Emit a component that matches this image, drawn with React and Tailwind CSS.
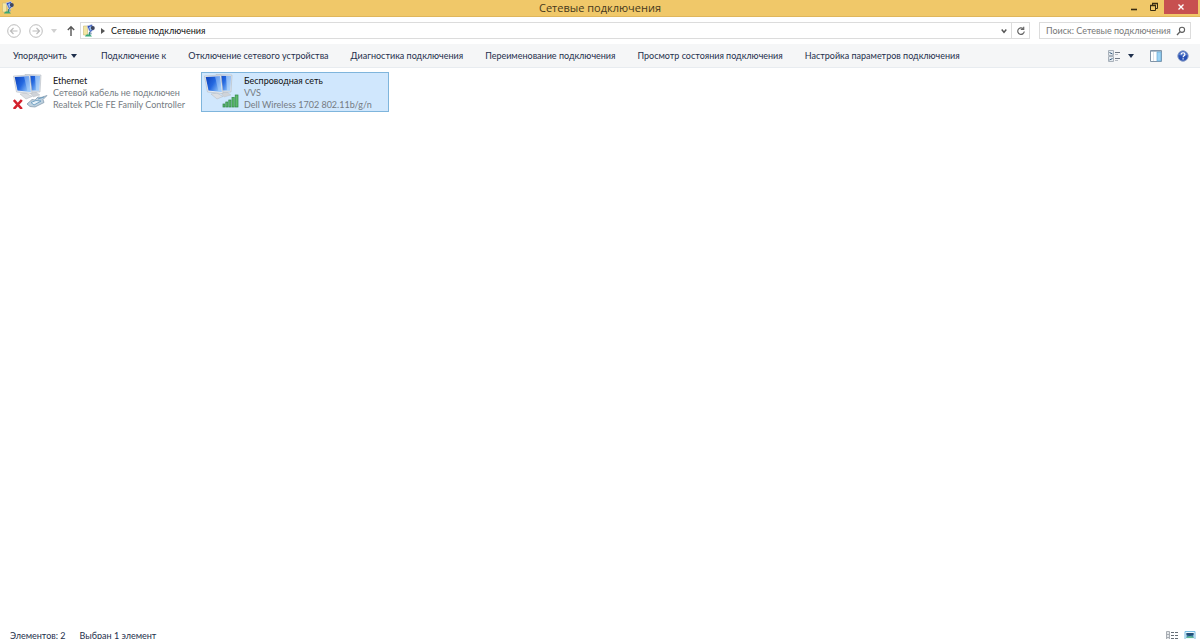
import React from "react";

function Monitors({ id }) {
  return (
    <>
      <defs>
        <linearGradient id={id + "s"} x1="0" y1="0" x2="1" y2="0.6">
          <stop offset="0" stopColor="#0d3fb8" />
          <stop offset="0.55" stopColor="#2468e0" />
          <stop offset="1" stopColor="#8cc0f8" />
        </linearGradient>
      </defs>
      <path d="M17 20l6-1 4 3-7 2z" fill="#cfd3d8" stroke="#b9bec5" strokeWidth="0.4" />
      <path d="M12 1.500L28 2 27 19 14 19z" fill="#dfe4ea" stroke="#b3bac3" strokeWidth="0.6" />
      <path d="M13 2.700L26.800 3.100 26 17.500 15 17.500z" fill={`url(#${id}s)`} />
      <path d="M22 3l4.800.1L26 17.500h-3z" fill="#b5d7fb" opacity="0.7" />
      <path d="M7 21l6-1 6 3.500-6 2.500z" fill="#dcdfe3" stroke="#b3b8bf" strokeWidth="0.5" />
      <path d="M0.500 3L17 2 19 20.500 3.500 19z" fill="#e8ecf0" stroke="#b3bac3" strokeWidth="0.6" />
      <path d="M1.700 4L16 3.200 17.700 18.900 4.500 17.600z" fill={`url(#${id}s)`} />
      <path d="M11 3.500l5-.3 1.700 15.700-3.200-.3z" fill="#b0d3fb" opacity="0.5" />
    </>
  );
}

function EthernetIcon() {
  return (
    <svg className="w-9 h-9 shrink-0" viewBox="0 0 36 36" aria-hidden="true">
      <Monitors id="eth" />
      <path d="M14 31l5-4.500 3 .5 3-3 3 .5 6-2-4 4 1 3-9 4.500-5-.5z" fill="#bdd0de" stroke="#7d94a8" strokeWidth="0.7" />
      <path d="M18 29.500l5-2 5 .5-7 4zM25 26l6-2" fill="#e6f0f7" stroke="#5f95bd" strokeWidth="0.8" />
      <path d="M0.800 27l8 9M8.800 27l-8 9" stroke="#d3202c" strokeWidth="2.600" />
    </svg>
  );
}

function WirelessIcon() {
  return (
    <svg className="w-9 h-9 shrink-0" viewBox="0 0 36 36" aria-hidden="true">
      <Monitors id="wifi" />
      <g fill="#5fba6c" stroke="#2d8745" strokeWidth="0.7">
        <rect x="19" y="31" width="1.800" height="3" />
        <rect x="21.800" y="29" width="2" height="5" />
        <rect x="24.800" y="27" width="2.200" height="7" />
        <rect x="28" y="24.500" width="2.200" height="9.500" />
        <rect x="31.200" y="22" width="2.800" height="12" />
      </g>
    </svg>
  );
}

function FolderNetIcon() {
  return (
    <svg className="w-3.5 h-3.5 shrink-0" viewBox="0 0 14 14" aria-hidden="true">
      <path d="M1.500 2h4v9h-4z" fill="#f3e7a4" stroke="#c9b872" strokeWidth="0.6" />
      <path d="M5 2l5-1.500 2 5-4 3z" fill="#2a49b8" stroke="#c9d2e4" strokeWidth="0.8" />
      <path d="M7 3l2.500-1 .5 4-2 .8z" fill="#9cc4f4" />
      <circle cx="10.800" cy="4" r="2" fill="#40465e" />
      <path d="M6 9l3-1 1 2-2 1z" fill="#8aa6bd" />
      <path d="M3 12.500c1-3 5-3 7 0z" fill="#38a877" />
      <path d="M7.500 8v3" stroke="#368f78" />
    </svg>
  );
}

function ArrowCircle({ flip }) {
  return (
    <svg className="w-3.5 h-3.5" viewBox="0 0 14 14" fill="none" stroke="#bcbcbc" aria-hidden="true">
      <circle cx="7" cy="7" r="6.300" />
      <path d={flip ? "M3.500 7h7M7.500 4l3 3-3 3" : "M10.500 7h-7M6.500 4l-3 3 3 3"} strokeWidth="1.200" />
    </svg>
  );
}

function Caret({ color = "#1e2f4c" }) {
  return (
    <svg className="w-1.5 h-1" viewBox="0 0 6 4" aria-hidden="true">
      <path d="M0 0h6L3 4z" fill={color} />
    </svg>
  );
}

const actions = [
  "Подключение к",
  "Отключение сетевого устройства",
  "Диагностика подключения",
  "Переименование подключения",
  "Просмотр состояния подключения",
  "Настройка параметров подключения",
];

function Connection({ icon, name, lines, selected }) {
  return (
    <button
      type="button"
      aria-pressed={selected}
      className={
        "flex w-[188px] h-10 items-start border pl-0.5 text-left leading-3 whitespace-nowrap " +
        (selected ? "bg-[#d0e7fd] border-[#7fb5dc]" : "border-transparent")
      }
    >
      {icon}
      <span className="flex flex-col pl-1 pt-0.5 text-[#757b82]">
        <span className="text-[#111]">{name}</span>
        {lines.map((line) => (
          <span key={line}>{line}</span>
        ))}
      </span>
    </button>
  );
}

export default function App() {
  return (
    <div className="flex h-screen flex-col overflow-hidden bg-white text-[9px] leading-3 text-[#111] font-['Lato','Open_Sans',sans-serif]">
      <header className="grid h-[17px] shrink-0 grid-cols-[1fr_auto_1fr] items-center border-b border-[#dfb65c] bg-[#f0c869]">
        <div className="pl-px">
          <FolderNetIcon />
        </div>
        <h1 className="font-['Open_Sans',sans-serif] text-[11px] leading-4 text-[#45381c]">Сетевые подключения</h1>
        <div className="flex h-full items-start justify-end pr-0.5">
          <button type="button" aria-label="Свернуть" className="grid h-3.5 w-5 place-items-center">
            <svg className="h-3 w-2" viewBox="0 0 8 12">
              <path d="M1 8.500h6" stroke="#382c12" strokeWidth="1.600" />
            </svg>
          </button>
          <button type="button" aria-label="Восстановить" className="grid h-3.5 w-5 place-items-center">
            <svg className="h-3 w-2.5" viewBox="0 0 10 12" fill="none" stroke="#382c12">
              <path d="M3.500 4V2.500h5v5H7" />
              <path d="M1.500 4.500h5v5h-5z" />
              <path d="M1 4.500h6M3 2.500h6" strokeWidth="1.500" />
            </svg>
          </button>
          <button type="button" aria-label="Закрыть" className="grid h-3.5 w-[34px] place-items-center bg-[#c75050]">
            <svg className="h-2 w-2" viewBox="0 0 8 8">
              <path d="M1.500 1.500l5 5M6.500 1.500l-5 5" stroke="#fff" strokeWidth="1.400" />
            </svg>
          </button>
        </div>
      </header>

      <nav className="flex h-[27px] shrink-0 items-center pl-[7px] pr-[9px]">
        <button type="button" aria-label="Назад"><ArrowCircle /></button>
        <button type="button" aria-label="Вперед" className="ml-2"><ArrowCircle flip /></button>
        <button type="button" aria-label="Последние расположения" className="ml-2 flex h-4 w-1.5 items-center">
          <Caret color="#d0d0d0" />
        </button>
        <button type="button" aria-label="Вверх" className="ml-[9px]">
          <svg className="h-3 w-2.5" viewBox="0 0 10 12" fill="none" stroke="#555" strokeWidth="1.400" aria-hidden="true">
            <path d="M5 11V2M1.800 5L5 1.800 8.200 5" />
          </svg>
        </button>
        <div className="ml-1 flex h-[17px] flex-1 items-center border border-[#dcdcdc] pl-px">
          <FolderNetIcon />
          <svg className="ml-[5px] mr-1.5 h-1.5 w-1" viewBox="0 0 4 6" aria-hidden="true">
            <path d="M0 0l4 3-4 3z" fill="#555" />
          </svg>
          <button type="button" className="flex-1 text-left">Сетевые подключения</button>
          <button type="button" aria-label="Предыдущие расположения" className="grid h-full w-3.5 place-items-center">
            <svg className="h-1.5 w-1.5" viewBox="0 0 6 6" fill="none" stroke="#555" strokeWidth="1.400">
              <path d="M.7 1.500L3 4.300l2.300-2.800" />
            </svg>
          </button>
          <button type="button" aria-label="Обновить" className="grid h-full w-[18px] place-items-center border-l border-[#dcdcdc]">
            <svg className="h-2.5 w-2.5" viewBox="0 0 10 10" fill="none" stroke="#666">
              <path d="M7.200 2.600A3.300 3.300 0 1 0 8.300 5.500" strokeWidth="1.200" />
              <path d="M4.800 3.300h2.900V.7" strokeWidth="1.200" />
            </svg>
          </button>
        </div>
        <label className="ml-[9px] flex h-[17px] w-[152px] items-center border border-[#dcdcdc] pl-1.5 pr-1">
          <input
            type="text"
            aria-label="Поиск"
            placeholder="Поиск: Сетевые подключения"
            className="min-w-0 flex-1 bg-transparent outline-none placeholder:text-[#777]"
          />
          <svg className="h-2.5 w-2.5 shrink-0" viewBox="0 0 10 10" fill="none" stroke="#5d5d5d" aria-hidden="true">
            <circle cx="6" cy="3.800" r="2.600" strokeWidth="1.100" />
            <path d="M4 5.800L1 9" strokeWidth="1.300" />
          </svg>
        </label>
      </nav>

      <div role="toolbar" className="flex h-6 shrink-0 items-center border-b border-[#e8ecf0] bg-[#f5f6f7] pl-[13px] pr-[11px] text-[#1e2f4c] whitespace-nowrap">
        <button type="button" className="mr-6 flex items-center gap-1">
          Упорядочить <Caret />
        </button>
        <div className="flex gap-[22px]">
          {actions.map((action) => (
            <button key={action} type="button">{action}</button>
          ))}
        </div>
        <div className="ml-auto flex items-center">
          <button type="button" aria-label="Изменить представление" className="flex items-center gap-2">
            <svg className="h-3 w-3" viewBox="0 0 12 12" fill="none" aria-hidden="true">
              <path d="M.5.500h5v5h-5zM.5 6.500h5v5h-5z" fill="#e3e9ef" stroke="#a9b1ba" />
              <path d="M1.500 2.500l3 1.500M4.500 8.500l-3 1.500" stroke="#395d7c" />
              <path d="M7 2.500h5M7 8.500h5" stroke="#707985" />
              <path d="M7 4.500h3M7 10.500h3" stroke="#b8bec6" />
            </svg>
            <Caret />
          </button>
          <button type="button" aria-label="Область предварительного просмотра" className="ml-4">
            <svg className="h-3 w-3" viewBox="0 0 12 12" aria-hidden="true">
              <path d="M.5.500h11v11H.5z" fill="#fff" stroke="#8194a7" />
              <path d="M1 1.500h10" stroke="#aebdca" />
              <path d="M7 2h4v9H7z" fill="#9dd4f5" stroke="#69a9d5" strokeWidth="0.700" />
              <path d="M3.500 2v9" stroke="#dce3e9" />
            </svg>
          </button>
          <button type="button" aria-label="Справка" className="ml-[15px]">
            <svg className="h-3 w-3" viewBox="0 0 12 12" aria-hidden="true">
              <circle cx="6" cy="6" r="5.200" fill="#2850b4" stroke="#8b9fc8" />
              <path d="M1.700 5a4.400 4.400 0 0 1 8.600 0c-2 1-6 1-8.600 0z" fill="#7897d9" opacity="0.600" />
              <path d="M4.200 4.500c0-2.400 3.700-2.200 3.700 0C7.900 5.800 6.100 5.800 6.100 7.200M6.100 8.200v1.300" fill="none" stroke="#fff" strokeWidth="1.200" />
            </svg>
          </button>
        </div>
      </div>

      <main className="flex flex-1 items-start gap-[3px] pl-2.5 pt-1">
        <Connection
          icon={<EthernetIcon />}
          name="Ethernet"
          lines={["Сетевой кабель не подключен", "Realtek PCIe FE Family Controller"]}
        />
        <Connection
          icon={<WirelessIcon />}
          name="Беспроводная сеть"
          lines={["VVS", "Dell Wireless 1702 802.11b/g/n"]}
          selected
        />
      </main>

      <footer className="flex h-[9px] shrink-0 items-start pl-2.5 pr-1 leading-3 text-[#1e2f4c]">
        <span>Элементов: 2</span>
        <span className="ml-3.5">Выбран 1 элемент</span>
        <span className="ml-auto flex gap-1.5">
          <button type="button" aria-label="Таблица">
            <svg className="h-3 w-3" viewBox="0 0 12 12" aria-hidden="true">
              <path d="M.5 1.500h3v9h-3z" fill="#e4e7ea" stroke="#a8adb3" />
              <path d="M1 4.500h2M1 7.500h2" stroke="#a8adb3" />
              <path d="M5 2.500h3M9 2.500h3M5 5.500h3M9 5.500h3M5 8.500h3M9 8.500h3" stroke="#666e77" />
            </svg>
          </button>
          <button type="button" aria-label="Крупные значки">
            <svg className="h-3 w-3" viewBox="0 0 12 12" aria-hidden="true">
              <path d="M1 1.500h10v9H1z" fill="#eaf6fd" stroke="#77bce2" />
              <path d="M2.500 3h7v5h-7z" fill="#3a83ad" />
              <path d="M2.500 3h7v2l-4 1-3-1z" fill="#234f78" />
              <path d="M2.500 7l4-1 3 1v1h-7z" fill="#61b894" />
            </svg>
          </button>
        </span>
      </footer>
    </div>
  );
}
